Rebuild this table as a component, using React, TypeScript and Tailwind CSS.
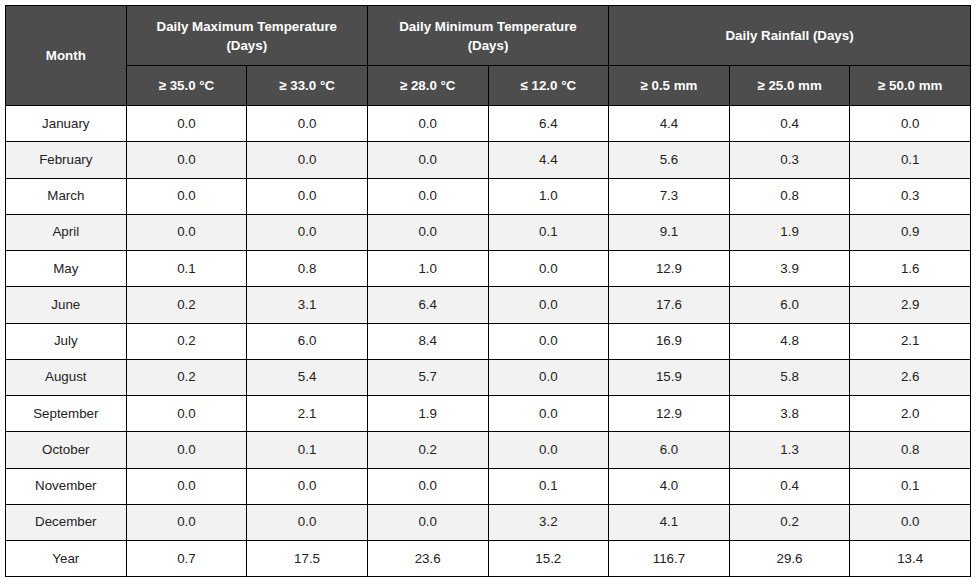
import React from 'react';

const rows: [string, string[]][] = [
  ['January', ['0.0', '0.0', '0.0', '6.4', '4.4', '0.4', '0.0']],
  ['February', ['0.0', '0.0', '0.0', '4.4', '5.6', '0.3', '0.1']],
  ['March', ['0.0', '0.0', '0.0', '1.0', '7.3', '0.8', '0.3']],
  ['April', ['0.0', '0.0', '0.0', '0.1', '9.1', '1.9', '0.9']],
  ['May', ['0.1', '0.8', '1.0', '0.0', '12.9', '3.9', '1.6']],
  ['June', ['0.2', '3.1', '6.4', '0.0', '17.6', '6.0', '2.9']],
  ['July', ['0.2', '6.0', '8.4', '0.0', '16.9', '4.8', '2.1']],
  ['August', ['0.2', '5.4', '5.7', '0.0', '15.9', '5.8', '2.6']],
  ['September', ['0.0', '2.1', '1.9', '0.0', '12.9', '3.8', '2.0']],
  ['October', ['0.0', '0.1', '0.2', '0.0', '6.0', '1.3', '0.8']],
  ['November', ['0.0', '0.0', '0.0', '0.1', '4.0', '0.4', '0.1']],
  ['December', ['0.0', '0.0', '0.0', '3.2', '4.1', '0.2', '0.0']],
  ['Year', ['0.7', '17.5', '23.6', '15.2', '116.7', '29.6', '13.4']],
];

const subHeads = ['≥ 35.0 °C', '≥ 33.0 °C', '≥ 28.0 °C', '≤ 12.0 °C', '≥ 0.5 mm', '≥ 25.0 mm', '≥ 50.0 mm'];

export default function App() {
  return (
    <div className="w-[979px] h-[586px] bg-white pl-[5px] pt-[5px] font-['Liberation_Sans',Arial,sans-serif]">
      <table className="w-[966px] table-fixed border-collapse text-center">
        <colgroup>
          {Array.from({ length: 8 }).map((_, i) => (
            <col key={i} className="w-[12.5%]" />
          ))}
        </colgroup>
        <thead>
          <tr className="h-[60px] bg-[#4d4d4d] text-white text-[13.33px] font-bold">
            <th rowSpan={2} className="border border-black px-2 leading-[18px]">Month</th>
            <th colSpan={2} className="border border-black px-2 leading-[19px]">
              Daily Maximum Temperature
              <br />
              (Days)
            </th>
            <th colSpan={2} className="border border-black px-2 leading-[19px]">
              Daily Minimum Temperature
              <br />
              (Days)
            </th>
            <th colSpan={3} className="border border-black px-2 leading-[18px]">Daily Rainfall (Days)</th>
          </tr>
          <tr className="h-[40px] bg-[#4d4d4d] text-white text-[13.33px] font-bold">
            {subHeads.map((h) => (
              <th key={h} className="border border-black px-2">{h}</th>
            ))}
          </tr>
        </thead>
        <tbody className="text-[13.33px] text-[#222]">
          {rows.map(([m, vals], i) => (
            <tr key={m} className={`h-[36.25px] ${i % 2 === 1 ? 'bg-[#f2f2f2]' : 'bg-white'}`}>
              <td className="border border-black px-2">{m}</td>
              {vals.map((v, j) => (
                <td key={j} className="border border-black px-2">{v}</td>
              ))}
            </tr>
          ))}
        </tbody>
      </table>
    </div>
  );
}
